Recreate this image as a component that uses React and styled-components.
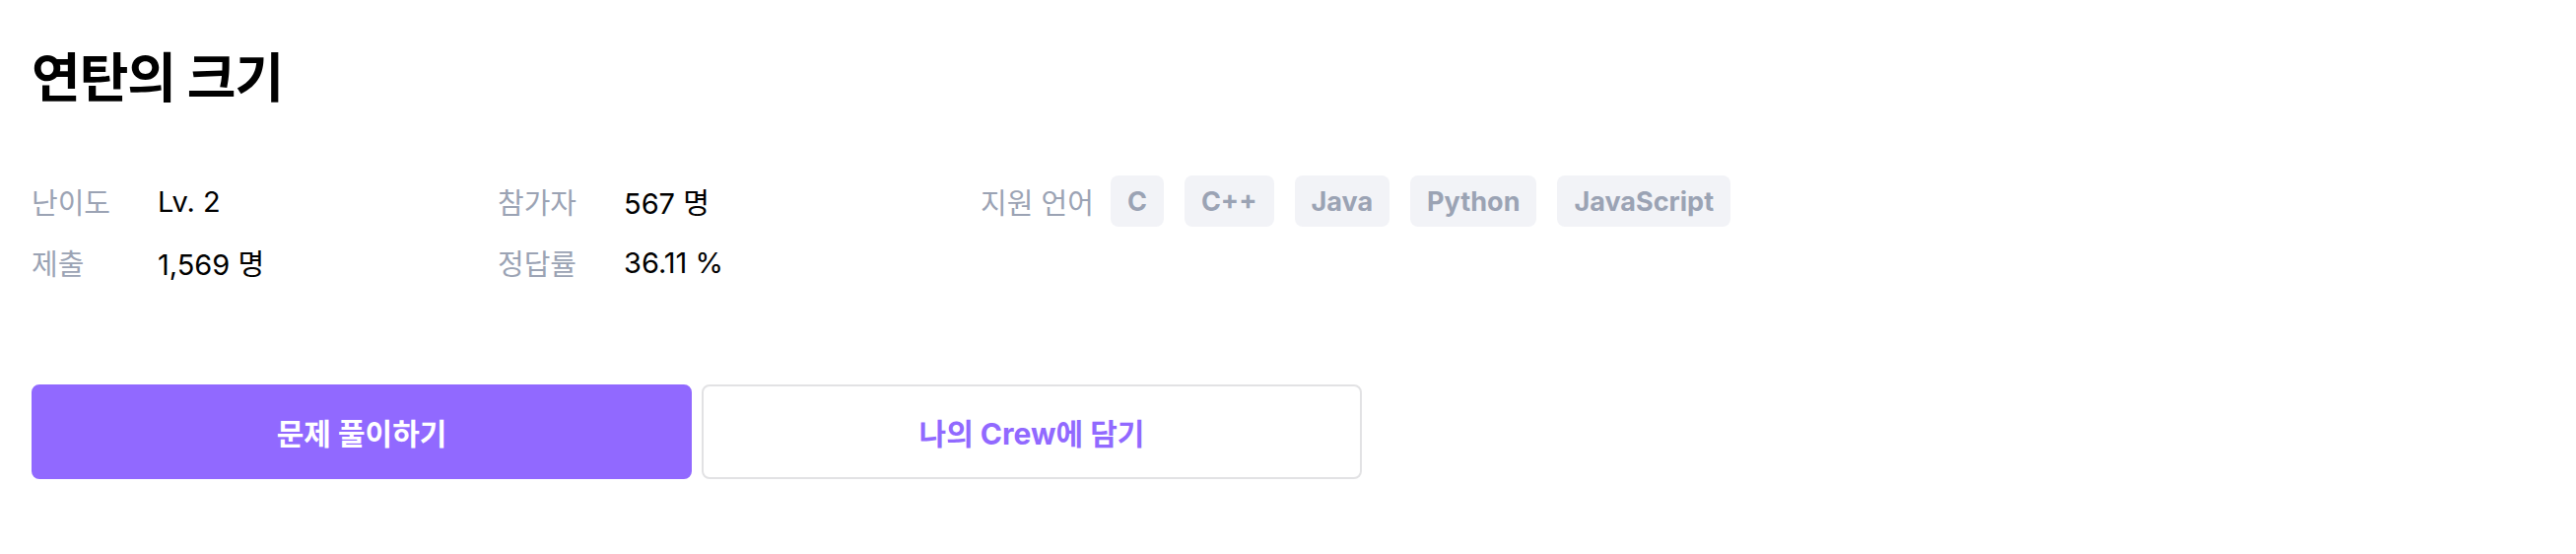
import React from "react";
import styled, { createGlobalStyle } from "styled-components";

const GlobalStyle = createGlobalStyle`
  body {
    margin: 0;
    background: #ffffff;
    font-family: "Inter", "Noto Sans CJK KR", sans-serif;
  }
`;

const Page = styled.div`
  padding: 44px 32px 0;
  width: 2614px;
  height: 562px;
  box-sizing: border-box;
`;

const Title = styled.h1`
  margin: 0;
  font-size: 54px;
  line-height: 72px;
  font-weight: 700;
  color: #000;
  letter-spacing: -1px;
`;

const InfoRow = styled.div`
  display: flex;
  align-items: flex-start;
  margin-top: 67px;
`;

const StatsGrid = styled.div`
  display: grid;
  grid-template-columns: 473px 490px;
  row-gap: 20px;
`;

const Stat = styled.div`
  display: flex;
  align-items: center;
  height: 42px;
  font-size: 29px;
`;

const Label = styled.span`
  width: 128px;
  color: #9ba3b4;
  flex-shrink: 0;
`;

const Value = styled.span`
  color: #000;
`;

const Languages = styled.div`
  display: flex;
  align-items: center;
  height: 42px;
  font-size: 29px;
`;

const LangLabel = styled.span`
  color: #9ba3b4;
  margin-right: 17px;
`;

const Chips = styled.div`
  display: flex;
  gap: 21px;
`;

const Chip = styled.span`
  display: inline-flex;
  align-items: center;
  height: 52px;
  padding: 0 17px;
  border-radius: 8px;
  background: #f2f3f7;
  color: #9ba3b4;
  font-size: 27px;
  font-weight: 700;
`;

const Actions = styled.div`
  display: flex;
  gap: 10px;
  margin-top: 103px;
`;

const Button = styled.button`
  width: 670px;
  height: 96px;
  border-radius: 8px;
  font-family: inherit;
  font-size: 30px;
  font-weight: 700;
  cursor: pointer;
  border: 2px solid ${(p) => (p.$primary ? "#9169ff" : "#e2e2e4")};
  background: ${(p) => (p.$primary ? "#9169ff" : "#ffffff")};
  color: ${(p) => (p.$primary ? "#ffffff" : "#9169ff")};
`;

const stats = [
  ["난이도", "Lv. 2"],
  ["참가자", "567 명"],
  ["제출", "1,569 명"],
  ["정답률", "36.11 %"],
];

const languages = ["C", "C++", "Java", "Python", "JavaScript"];

export default function App() {
  return (
    <>
      <GlobalStyle />
      <Page>
        <Title>연탄의 크기</Title>
        <InfoRow>
          <StatsGrid>
            {stats.map(([label, value]) => (
              <Stat key={label}>
                <Label>{label}</Label>
                <Value>{value}</Value>
              </Stat>
            ))}
          </StatsGrid>
          <Languages>
            <LangLabel>지원 언어</LangLabel>
            <Chips>
              {languages.map((lang) => (
                <Chip key={lang}>{lang}</Chip>
              ))}
            </Chips>
          </Languages>
        </InfoRow>
        <Actions>
          <Button $primary>문제 풀이하기</Button>
          <Button>나의 Crew에 담기</Button>
        </Actions>
      </Page>
    </>
  );
}
